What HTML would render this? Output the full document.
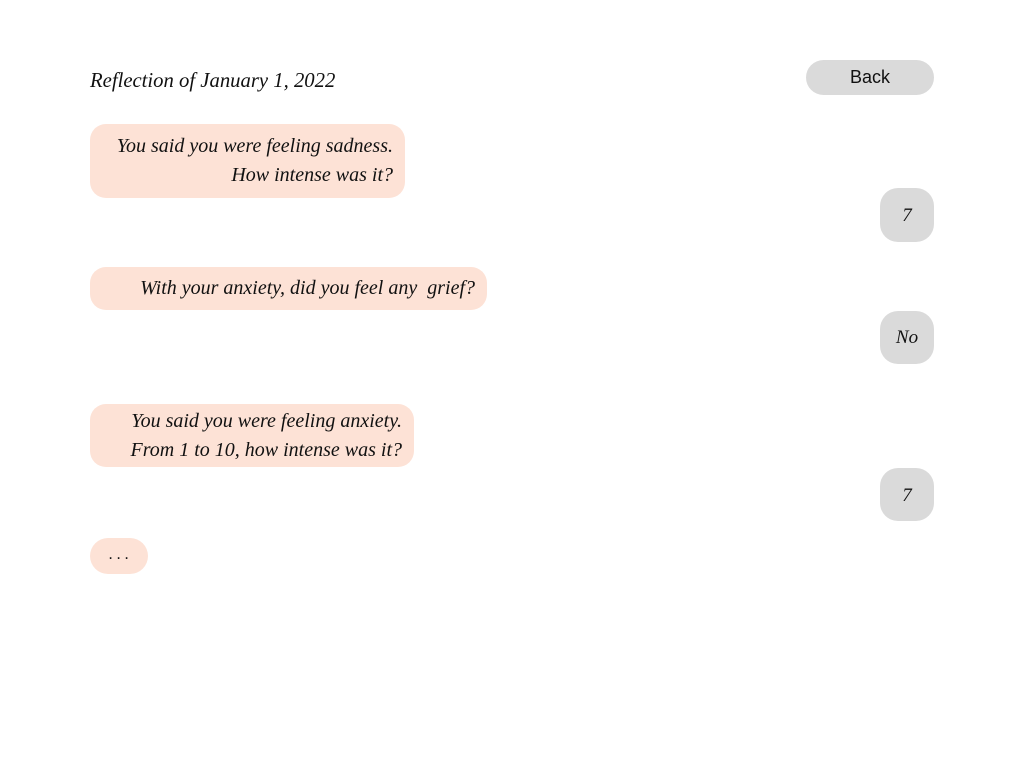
<!DOCTYPE html>
<html><head><meta charset="utf-8"><style>
body{margin:0;width:1024px;height:768px;background:#fff;position:relative;overflow:hidden;font-family:"Liberation Serif",serif;font-style:italic;color:#111}
.a{position:absolute;box-sizing:border-box}
.q{background:#fde2d6;border-radius:16px;text-align:right;font-size:20px;line-height:29px;white-space:nowrap;padding-right:12px}
.r{background:#dadada;border-radius:18px;text-align:center;font-size:19px}
</style></head><body>
<div class="a" style="left:90px;top:70px;font-size:20.7px;white-space:nowrap">Reflection of January 1, 2022</div>
<div class="a" style="left:806px;top:60px;width:128px;height:35px;background:#dadada;border-radius:18px;font-family:'Liberation Sans',sans-serif;font-style:normal;font-size:18px;text-align:center;line-height:34px">Back</div>
<div class="a q" style="left:90px;top:124px;width:315px;height:74px;padding-top:8px">You said you were feeling sadness.<br>How intense was it?</div>
<div class="a r" style="left:880px;top:188px;width:54px;height:54px;line-height:56px">7</div>
<div class="a q" style="left:90px;top:267px;width:397px;height:43px;line-height:43px">With your anxiety, did you feel any&nbsp; grief?</div>
<div class="a r" style="left:880px;top:311px;width:54px;height:53px;line-height:53px">No</div>
<div class="a q" style="left:90px;top:404px;width:324px;height:63px;padding-top:3px">You said you were feeling anxiety.<br>From 1 to 10, how intense was it?</div>
<div class="a r" style="left:880px;top:468px;width:54px;height:53px;line-height:56px">7</div>
<div class="a q" style="left:90px;top:538px;width:58px;height:36px;line-height:34px;text-align:center;padding:0;font-size:16px;border-radius:18px">. . .</div>
</body></html>
